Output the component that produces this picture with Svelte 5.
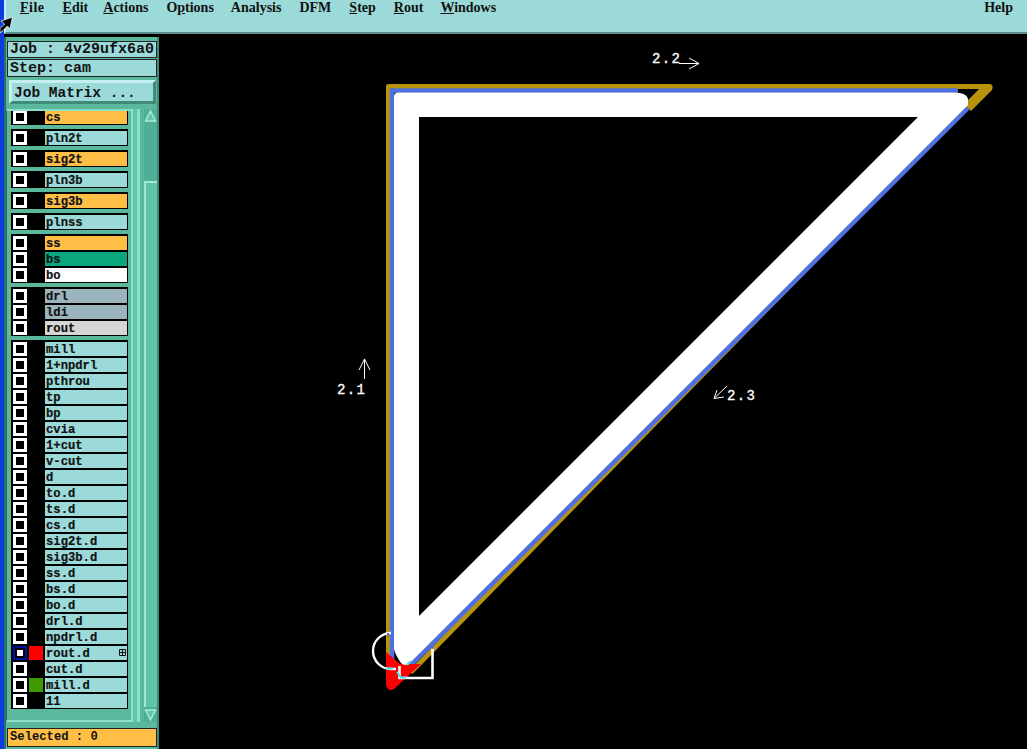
<script>
  const menu = [
    { u: 'F', t: 'ile' }, { u: 'E', t: 'dit' }, { u: 'A', t: 'ctions' },
    { b: 'O', u: 'p', t: 'tions' }, { b: 'Analysis' }, { b: 'DFM' },
    { u: 'S', t: 'tep' }, { u: 'R', t: 'out' }, { u: 'W', t: 'indows' }
  ];
  const groups = [
    [{ n: 'cs', c: 'o' }],
    [{ n: 'pln2t' }],
    [{ n: 'sig2t', c: 'o' }],
    [{ n: 'pln3b' }],
    [{ n: 'sig3b', c: 'o' }],
    [{ n: 'plnss' }],
    [{ n: 'ss', c: 'o' }, { n: 'bs', c: 'g' }, { n: 'bo', c: 'w' }],
    [{ n: 'drl', c: 's' }, { n: 'ldi', c: 's' }, { n: 'rout', c: 'l' }],
    ['mill', '1+npdrl', 'pthrou', 'tp', 'bp', 'cvia', '1+cut', 'v-cut', 'd', 'to.d', 'ts.d', 'cs.d', 'sig2t.d', 'sig3b.d', 'ss.d', 'bs.d', 'bo.d', 'drl.d', 'npdrl.d']
      .map((n) => ({ n }))
      .concat([{ n: 'rout.d', sel: true, sw: '#ff0000', mark: true }, { n: 'cut.d' }, { n: 'mill.d', sw: '#3f9a00' }, { n: '11' }])
  ];
</script>

<div class="screen">
  <div class="edge"></div>
  <div class="main">
    <header class="menubar">
      <nav class="menus">
        {#each menu as m}
          <span class="menu">{m.b ?? ''}{#if m.u}<u>{m.u}</u>{/if}{m.t ?? ''}</span>
        {/each}
      </nav>
      <span class="menu help">Help</span>
    </header>
    <div class="body">
      <aside class="side">
        <div class="info job">Job : 4v29ufx6a0</div>
        <div class="info step">Step: cam</div>
        <button class="matrix">Job Matrix ...</button>
        <div class="layers">
          <div class="list">
            <div class="stack">
              {#each groups as g}
                <div class="group">
                  {#each g as r}
                    <div class="row">
                      <span class="check" class:sel={r.sel}><i></i></span>
                      <span class="swatch" style:background={r.sw ?? '#000'}></span>
                      <span class="label {r.c ?? ''}">{r.n}{#if r.mark}<svg class="mark" width="7" height="7" viewBox="0 0 7 7"><path d="M.5.5h6v6h-6zM3.500.5v6M.5 3.500h6" fill="none" stroke="#111"/></svg>{/if}</span>
                    </div>
                  {/each}
                </div>
              {/each}
            </div>
          </div>
          <div class="gutter"></div>
          <div class="scroll">
            <svg class="arrow" viewBox="0 0 13 14" width="13" height="14"><path d="M6.500 2 11.500 12H1.500Z" fill="#5fc6a8" stroke="#a5ecd6" stroke-width="1.500"/></svg>
            <div class="trough"><div class="thumb"></div></div>
            <svg class="arrow" viewBox="0 0 13 14" width="13" height="14"><path d="M6.500 12 11.500 2H1.500Z" fill="#5fc6a8" stroke="#a5ecd6" stroke-width="1.500"/></svg>
          </div>
        </div>
        <div class="selected">Selected : 0</div>
      </aside>
      <section class="canvas">
        <svg width="868" height="712" viewBox="159 37 868 712">
          <path d="M388.500 665V86.500H985L412 671" fill="none" stroke="#b8930c" stroke-width="5" stroke-linejoin="round" stroke-linecap="round"/>
          <path d="M975 84H990Q994 85 992 90L971 111 964 104 981 88H975Z" fill="#b8930c"/>
          <path d="M392 660V90.500H958M968 108 408 668" fill="none" stroke="#4f70e4" stroke-width="4.500"/>
          <path d="M386 652V685Q388 692 394 689L421 664H400Z" fill="#f00"/>
          <path fill-rule="evenodd" fill="#fff" d="M394 97Q394 92.500 398 92.500H955Q968 93 968 100V105L410 663Q403 668 399 660Q394 652 394 648ZM419 117H918L419 616Z"/>
          <path d="M391 633A18 18 0 0 0 391 669H396" fill="none" stroke="#fff" stroke-width="2.400"/>
          <path d="M432.500 648V678H399.500V666" fill="none" stroke="#fff" stroke-width="2.600"/>
          <path d="M386 668.500H393M397 672 401 677.500H406M407 665 411 661" fill="none" stroke="#3ee0e6" stroke-width="2"/>
          <path d="M388 633V636M432.500 645V649" stroke="#4f70e4" stroke-width="2"/>
          <g class="arrows">
            <path d="M364.500 379V359M359 370 364.500 359 370 370"/>
            <path d="M679 63.500H699M689 58 699 63.500 689 69"/>
            <path d="M727 386 714 398.500M717 390 714 398.500 724 397"/>
          </g>
          <g class="lbl">
            <text x="337" y="394">2.1</text>
            <text x="652" y="63">2.2</text>
            <text x="727" y="400">2.3</text>
          </g>
        </svg>
      </section>
    </div>
  </div>
  <svg class="cursor" width="14" height="18" viewBox="0 0 14 18"><path d="M12.500 1 1 5 4.500 8 0 12.500V17L3 14.500 7.500 10 10 13Z" fill="#000" stroke="#fff" stroke-width=".8"/></svg>
</div>

<style>
  :global(body) { margin: 0; background: #000; overflow: hidden; }
  .screen { position: relative; width: 1027px; height: 749px; display: flex; background: #000; overflow: hidden; }
  .edge { width: 4px; background: #0a3ce0; flex: none; height: 100%; }
  .main { flex: 1; display: flex; flex-direction: column; min-width: 0; }
  .menubar {
    height: 32px; flex: none; display: flex; justify-content: space-between; align-items: flex-start;
    background: #9cdada; border-bottom: 2px solid #5d8c8c; border-left: 2px solid #c8efef; padding: 0 14px 0 14px;
  }
  .menus { display: flex; gap: 18px; }
  .menu { font: bold 14px/15px "Liberation Serif", serif; color: #111; }
  .menu:nth-child(1) { letter-spacing: .5px; }
  .menu:nth-child(3) { margin-left: -3px; }
  .menu:nth-child(5) { margin-left: -1px; }
  .menu:nth-child(9) { margin-left: -1px; }
  .body { flex: 1; display: flex; min-height: 0; border-top: 3px solid #000; }
  .side {
    width: 155px; flex: none; box-sizing: border-box; background: #5ab99c; padding: 4px 0 2px 0;
    display: flex; flex-direction: column; border-left: 2px solid #2f6f60; border-right: 2px solid #3e8a78;
  }
  .info {
    box-sizing: border-box; margin-left: 1px; width: 150px; background: #9cdada; border: 1px solid #222;
    font: bold 15px/15px "Liberation Mono", monospace; color: #111; padding-left: 2px; white-space: nowrap; overflow: hidden;
  }
  .job { height: 17px; margin-bottom: 1px; }
  .step { height: 18px; line-height: 17px; }
  .matrix {
    height: 24px; width: 147px; margin: 3px 0 5px 3px; padding: 2px 0 0 2px; text-align: left; background: #9cdada;
    border: 3px solid; border-color: #c6efef #3f8a78 #3f8a78 #c6efef;
    font: bold 14.500px/17px "Liberation Mono", monospace; color: #111; box-sizing: border-box;
  }
  .layers { flex: 1; display: flex; min-height: 0; }
  .list {
    width: 127px; flex: none; overflow: hidden; box-sizing: border-box;
    border-top: 2px solid #8fe0c6; border-right: 2px solid #8fe0c6; border-bottom: 2px solid #8fe0c6; border-left: 1px solid #2f6f60;
    padding-left: 4px; background: #5ab99c;
  }
  .stack { display: flex; flex-direction: column; gap: 4px; margin-top: -3px; }
  .group { background: #000; padding: 1px 0 0 2px; width: 117px; box-sizing: border-box; display: flex; flex-direction: column; }
  .row { height: 16px; display: flex; align-items: flex-start; }
  .check { width: 14px; height: 14px; margin: 1px 2px 0 0; box-sizing: border-box; background: #fff; padding: 3px; flex: none; display: block; }
  .check i { display: block; width: 8px; height: 8px; background: #000; }
  .check.sel { background: #0010a0; padding: 2px; }
  .check.sel i { background: #fff; width: 10px; height: 10px; border: 2px solid #000; box-sizing: border-box; }
  .swatch { width: 14px; height: 14px; margin: 1px 2px 0 0; flex: none; }
  .label {
    flex: 1; height: 14px; margin: 1px 1px 0 0; box-sizing: border-box; background: #9cdada; position: relative;
    font: bold 12.200px/16px "Liberation Mono", monospace; color: #111; padding-left: 1px; white-space: nowrap;
    -webkit-text-stroke: .2px #111;
  }
  .label.o { background: #ffbf47; }
  .label.g { background: #0aa67c; }
  .label.w { background: #fff; }
  .label.s { background: #9bb4bd; }
  .label.l { background: #d6d6d6; }
  .mark { position: absolute; right: 1px; top: 3px; display: block; }
  .gutter { width: 7px; flex: none; box-sizing: border-box; background: #5fc6a8; border-right: 3px solid #8fe0c6; margin-right: 4px; }
  .scroll { width: 13px; flex: none; display: flex; flex-direction: column; background: #4fae96; }
  .arrow { display: block; flex: none; }
  .trough { flex: 1; background: #4fae96; padding: 58px 0 1px; min-height: 0; box-sizing: border-box; }
  .thumb { height: 100%; background: #5ec4a5; border-top: 2px solid #9fe8d2; border-left: 2px solid #9fe8d2; box-sizing: border-box; }
  .selected {
    height: 19px; width: 150px; box-sizing: border-box; margin: 6px 0 0 1px; background: #ffbf47; border: 1px solid #222;
    font: bold 12.200px/16px "Liberation Mono", monospace; color: #111; padding-left: 2px;
  }
  .canvas { flex: 1; background: #000; min-width: 0; overflow: hidden; }
  .canvas svg { display: block; }
  .arrows path { fill: none; stroke: #fff; stroke-width: 1; }
  .lbl text { font: 14px "Liberation Mono", monospace; fill: #fff; stroke: #fff; stroke-width: .3px; letter-spacing: 1.300px; }
  .cursor { position: absolute; left: 0; top: 16px; }
</style>
